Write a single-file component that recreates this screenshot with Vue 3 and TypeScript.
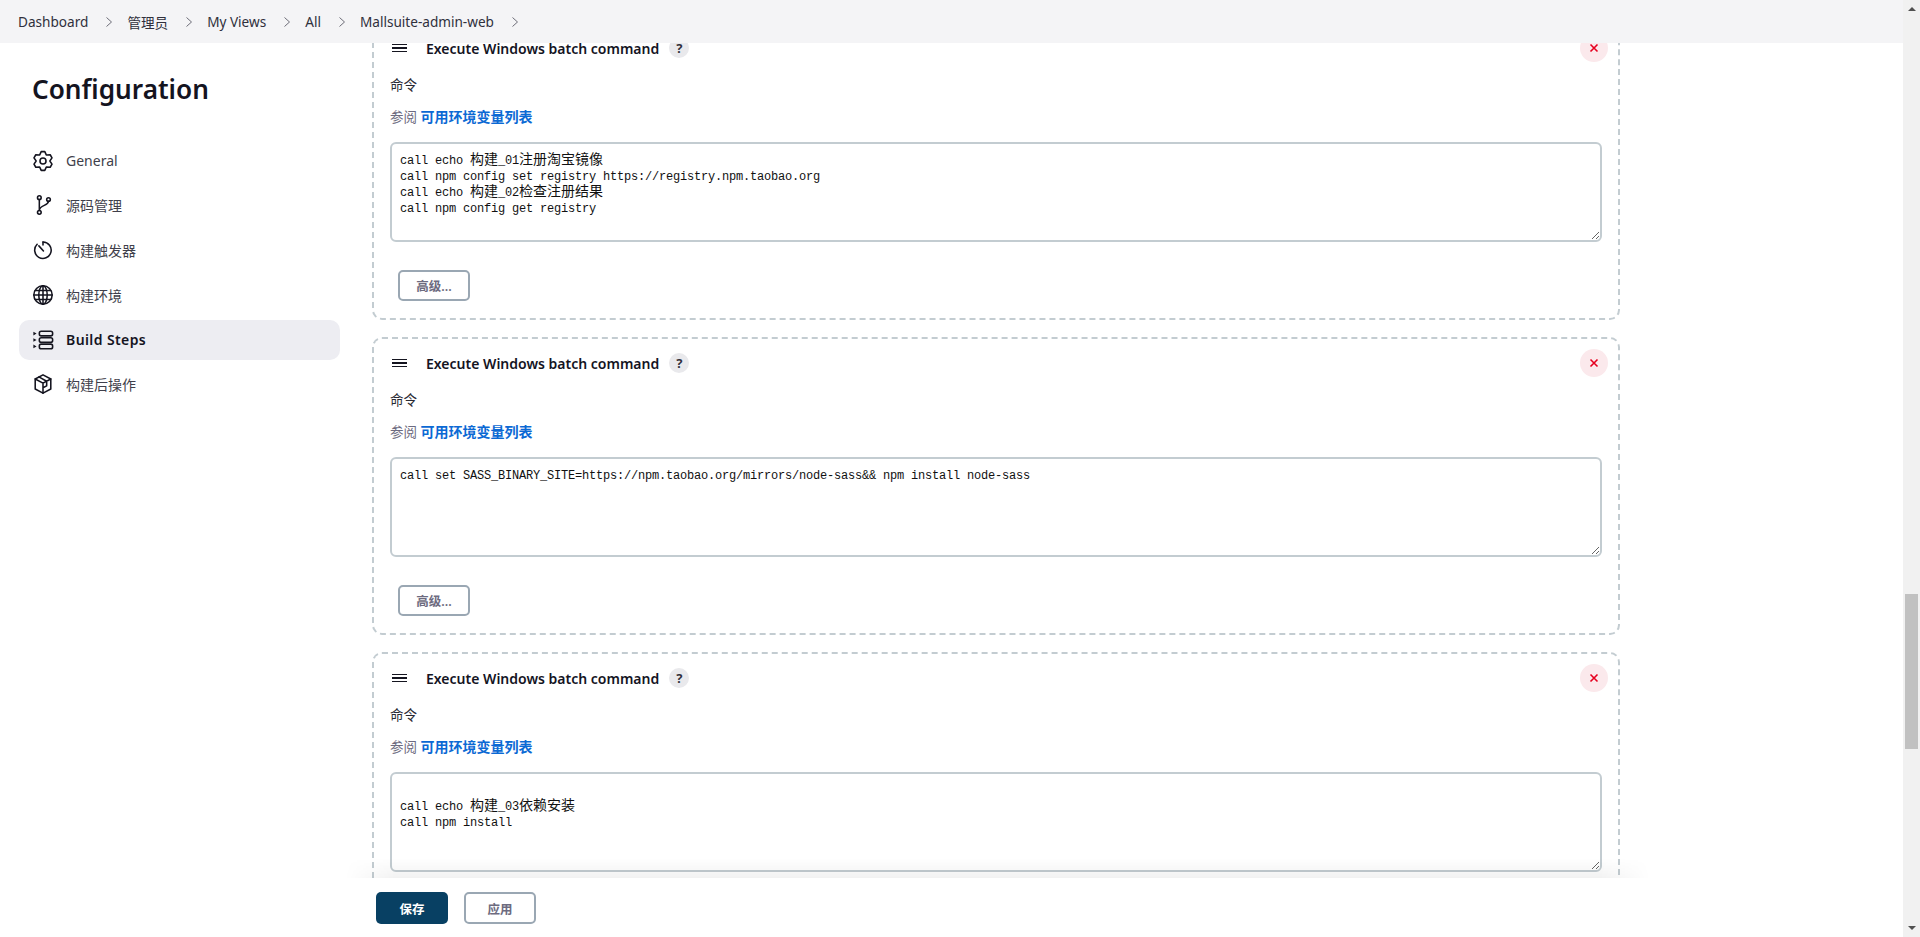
<script setup lang="ts">
interface Seg { text: string; cjk?: boolean }
interface Step { id: number; advanced: boolean; lines: Seg[][] }

const crumbs = ['Dashboard', '管理员', 'My Views', 'All', 'Mallsuite-admin-web']

const nav = [
  { key: 'gear', label: 'General' },
  { key: 'branch', label: '源码管理' },
  { key: 'timer', label: '构建触发器' },
  { key: 'globe', label: '构建环境' },
  { key: 'steps', label: 'Build Steps', active: true },
  { key: 'box', label: '构建后操作' },
]

const steps: Step[] = [
  {
    id: 1,
    advanced: true,
    lines: [
      [{ text: 'call echo ' }, { text: '构建', cjk: true }, { text: '_01' }, { text: '注册淘宝镜像', cjk: true }],
      [{ text: 'call npm config set registry https://registry.npm.taobao.org' }],
      [{ text: 'call echo ' }, { text: '构建', cjk: true }, { text: '_02' }, { text: '检查注册结果', cjk: true }],
      [{ text: 'call npm config get registry' }],
    ],
  },
  {
    id: 2,
    advanced: true,
    lines: [[{ text: 'call set SASS_BINARY_SITE=https://npm.taobao.org/mirrors/node-sass&& npm install node-sass' }]],
  },
  {
    id: 3,
    advanced: false,
    lines: [
      [{ text: '\u00a0' }],
      [{ text: 'call echo ' }, { text: '构建', cjk: true }, { text: '_03' }, { text: '依赖安装', cjk: true }],
      [{ text: 'call npm install' }],
    ],
  },
]

const gearPoints = Array.from({ length: 6 }, (_, i) => {
  const a = (i * 60 - 90) * Math.PI / 180
  const p = (r: number, d: number) => {
    const t = a + d * Math.PI / 180
    return `${(12 + r * Math.cos(t)).toFixed(2)},${(12 + r * Math.sin(t)).toFixed(2)}`
  }
  return [p(7.6, -28), p(10.4, -11), p(10.4, 11), p(7.6, 28)].join(' ')
}).join(' ')
</script>

<template>
  <div class="page">
    <div class="window">
      <header class="topbar">
        <template v-for="c in crumbs" :key="c">
          <span class="crumb">{{ c }}</span>
          <svg class="chev" viewBox="0 0 8 12" width="8" height="12"><path d="M1.5 1.5 6.5 6l-5 4.500" /></svg>
        </template>
      </header>

      <div class="body">
        <aside class="side">
          <h1 class="title">Configuration</h1>
          <nav class="nav">
            <a v-for="n in nav" :key="n.key" class="nav-item" :class="{ active: n.active }">
              <svg class="nav-icon" viewBox="0 0 24 24" width="22" height="22">
                <template v-if="n.key === 'gear'">
                  <polygon :points="gearPoints" />
                  <circle cx="12" cy="12" r="3.300" />
                </template>
                <template v-else-if="n.key === 'branch'">
                  <circle cx="8" cy="4" r="2" />
                  <circle cx="8" cy="20" r="2" />
                  <circle cx="18" cy="6" r="2" />
                  <path d="M8 6v12M18 8c0 5-10 3.800-10 10" />
                </template>
                <template v-else-if="n.key === 'timer'">
                  <path d="M12 3.200a9 9 0 1 1-6.400 2.600" />
                  <path d="M12 3.200v3.300M7.500 7.500l5 5.600" />
                </template>
                <template v-else-if="n.key === 'globe'">
                  <circle cx="12" cy="12" r="10" />
                  <ellipse cx="12" cy="12" rx="4.600" ry="10" />
                  <path d="M12 2v20M2 12h20M3.500 7h17M3.500 17h17" />
                </template>
                <template v-else-if="n.key === 'steps'">
                  <path class="fill" d="M1.500 3 5 5 1.500 7zM1.500 10 5 12l-3.500 2zM1.500 17 5 19l-3.500 2z" />
                  <rect x="8" y="2.500" width="14.500" height="5" rx="2" />
                  <rect x="8" y="9.500" width="14.500" height="5" rx="2" />
                  <rect x="8" y="16.500" width="14.500" height="5" rx="2" />
                </template>
                <template v-else>
                  <path d="M12 2 3.500 6.500v11L12 22l8.500-4.500v-11z" />
                  <path d="M3.500 6.500 12 11l8.500-4.500M12 11v11M7.500 4.300 16 9v5l-3 1.500" />
                </template>
              </svg>
              <span>{{ n.label }}</span>
            </a>
          </nav>
        </aside>

        <main class="content">
          <section v-for="s in steps" :key="s.id" class="card">
            <div class="card-head">
              <span class="grip"><i /><i /><i /></span>
              <span class="card-title">Execute Windows batch command</span>
              <span class="help">?</span>
              <button class="close" type="button" aria-label="close">
                <svg viewBox="0 0 10 10" width="10" height="10"><path d="M1.500 1.500l7 7M8.500 1.500l-7 7" /></svg>
              </button>
            </div>
            <div class="label">命令</div>
            <div class="hint">参阅 <a class="link">可用环境变量列表</a></div>
            <div class="editor" role="textbox">
              <div v-for="(line, i) in s.lines" :key="i" class="line">
                <span v-for="(seg, j) in line" :key="j" :class="{ cjk: seg.cjk }">{{ seg.text }}</span>
              </div>
            </div>
            <button v-if="s.advanced" class="btn adv" type="button">高级...</button>
          </section>
        </main>

        <footer class="bottom">
          <button class="btn primary" type="button">保存</button>
          <button class="btn apply" type="button">应用</button>
        </footer>
      </div>
    </div>

    <div class="scrollbar" aria-hidden="true">
      <span class="arrow up" />
      <span class="thumb" />
      <span class="arrow down" />
    </div>
  </div>
</template>

<style>
html, body { margin: 0; overflow: hidden; background: #fff; }
</style>

<style scoped>
.page {
  display: flex;
  height: 937px;
  overflow: hidden;
  font-family: "Noto Sans", "Noto Sans CJK SC", sans-serif;
  font-size: 14px;
  color: #14141f;
  background: #fff;
}
.window { flex: 1; min-width: 0; display: flex; flex-direction: column; }
.topbar {
  position: relative;
  z-index: 3;
  flex: none;
  height: 43px;
  box-sizing: border-box;
  padding-left: 18px;
  display: flex;
  align-items: center;
  background: #f4f4f6;
  color: #30303c;
  font-size: 13.600px;
}
.chev { margin: 0 14px 0 17px; fill: none; stroke: #6d6d78; stroke-width: 1; }
.body {
  position: relative;
  flex: 1;
  min-height: 0;
  display: grid;
  grid-template-columns: 321px 1248px;
  column-gap: 32px;
  padding-left: 19px;
  overflow: hidden;
}
.side { min-width: 0; }
.title {
  margin: 25px 0 0 13px;
  font-size: 26.200px;
  line-height: 42px;
  font-weight: 600;
  color: #14141f;
}
.nav { margin-top: 30.500px; display: flex; flex-direction: column; gap: 4.800px; }
.nav-item {
  height: 40px;
  display: flex;
  align-items: center;
  gap: 12px;
  padding-left: 13px;
  border-radius: 10px;
  color: #3f3f4b;
}
.nav-item.active { background: #ededf2; color: #14141f; font-weight: 600; letter-spacing: 0.4px; }
.nav-icon { flex: none; fill: none; stroke: #14141f; stroke-width: 1.700; stroke-linecap: round; stroke-linejoin: round; }
.nav-icon .fill { fill: #14141f; stroke: none; }

.content { margin-top: -21px; display: flex; flex-direction: column; gap: 17px; }
.card {
  flex: none;
  height: 298px;
  box-sizing: border-box;
  padding: 0 16px;
  border: 2px dashed #c3ccd1;
  border-radius: 10px;
}
.card-head { height: 48px; display: flex; align-items: center; position: relative; }
.grip { width: 15px; margin-left: 2px; display: flex; flex-direction: column; gap: 2px; margin-right: 19px; }
.grip i { display: block; height: 1.500px; background: #14141f; }
.card-title { font-weight: 600; font-size: 14px; }
.help {
  margin-left: 10px;
  width: 20px;
  height: 20px;
  border-radius: 50%;
  background: #e9e9ec;
  color: #30303c;
  font-weight: 700;
  font-size: 13px;
  display: flex;
  align-items: center;
  justify-content: center;
}
.close {
  margin-left: auto;
  margin-right: -6px;
  width: 28px;
  height: 28px;
  padding: 0;
  border: 0;
  border-radius: 50%;
  background: #fbe9ec;
  display: flex;
  align-items: center;
  justify-content: center;
}
.close svg { fill: none; stroke: #e6001f; stroke-width: 1.600; }
.label { margin-top: 3px; line-height: 20px; font-size: 13.500px; color: #2a2a33; }
.hint { margin-top: 12px; line-height: 20px; font-size: 13.500px; color: #6d6b80; }
.link { color: #0b69d4; font-weight: 600; font-size: 14px; }
.editor {
  margin-top: 15px;
  height: 100px;
  box-sizing: border-box;
  padding: 9px 8px 0;
  border: 2px solid #c3ccd1;
  border-radius: 6px;
  font-family: "Liberation Mono", "Noto Sans CJK SC", monospace;
  font-size: 12px;
  letter-spacing: -0.2px;
  color: #111;
  overflow: auto;
  resize: vertical;
}
.line { height: 16px; line-height: 16px; white-space: pre; }
.cjk { font-family: "Noto Sans CJK SC", sans-serif; font-size: 14px; letter-spacing: 0; line-height: 0; }
.btn {
  font-family: "Noto Sans", "Noto Sans CJK SC", sans-serif;
  font-size: 12.500px;
  font-weight: 600;
  border-radius: 5px;
  cursor: pointer;
  box-sizing: border-box;
}
.adv {
  display: block;
  margin: 28px 0 0 8px;
  width: 72px;
  height: 31px;
  padding: 0;
  background: #fff;
  border: 2px solid #9aa7b3;
  color: #6d6b80;
}
.bottom {
  position: absolute;
  z-index: 2;
  left: 345px;
  right: 253px;
  bottom: 0;
  height: 59px;
  box-sizing: border-box;
  padding: 14px 0 0 31px;
  background: #fff;
  display: flex;
  align-items: flex-start;
  gap: 16px;
}
.bottom::before {
  content: "";
  position: absolute;
  left: 0;
  right: 0;
  top: -20px;
  height: 20px;
  background: linear-gradient(to bottom, rgba(0, 0, 0, 0), rgba(0, 0, 0, 0.05));
  -webkit-mask-image: linear-gradient(to right, transparent, #000 50px, #000 calc(100% - 50px), transparent);
  mask-image: linear-gradient(to right, transparent, #000 50px, #000 calc(100% - 50px), transparent);
}
.bottom .btn { width: 72px; height: 32px; padding: 0; }
.primary { background: #084063; border: 0; color: #fff; }
.apply { background: #fff; border: 2px solid #9aa7b3; color: #6d6b80; }

.scrollbar {
  flex: none;
  width: 17px;
  background: #f1f1f1;
  display: flex;
  flex-direction: column;
  align-items: center;
}
.arrow { width: 0; height: 0; border-left: 4px solid transparent; border-right: 4px solid transparent; }
.arrow.up { margin-top: 7px; border-bottom: 4px solid #505050; }
.thumb { margin-top: 583px; width: 13px; height: 155px; background: #c1c1c1; }
.arrow.down { margin-top: auto; margin-bottom: 7px; border-top: 4px solid #505050; }
</style>
